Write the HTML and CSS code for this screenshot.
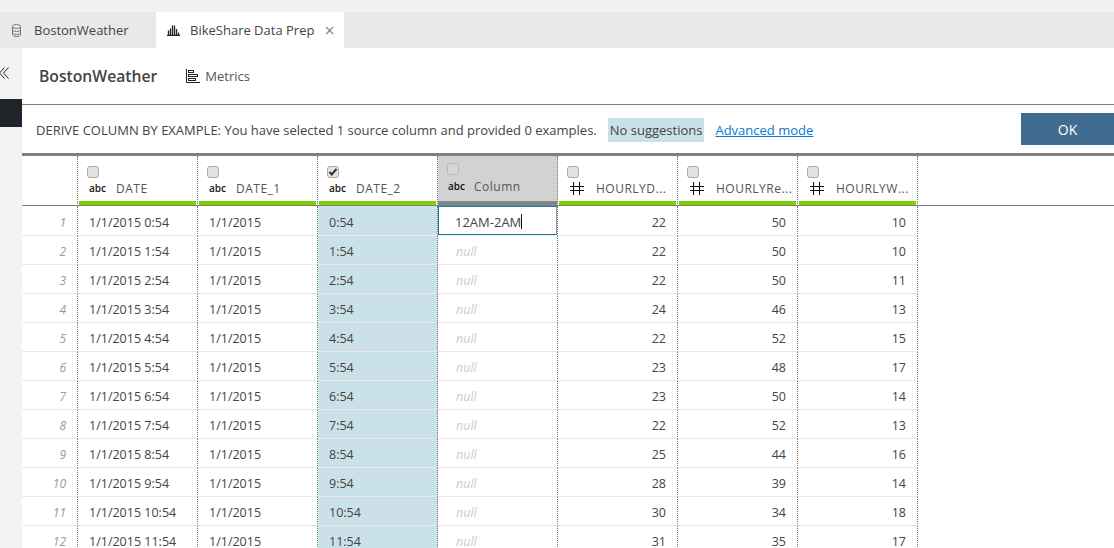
FILE: index.html
```html
<!DOCTYPE html>
<html lang="en">
  <head>
    <meta charset="UTF-8" />
    <title>BikeShare Data Prep</title>
    <link rel="stylesheet" href="styles.css">
  </head>
  <body>
    <div class="tabbar">
      <div class="tab">
        <svg class="tab-icon" width="11" height="13" viewBox="0 0 11 13" fill="none" stroke="#777" stroke-width="1">
          <ellipse cx="5.5" cy="2.5" rx="4" ry="2" />
          <path d="M1.5 2.5v8c0 1.1 1.8 2 4 2s4-.9 4-2v-8M1.5 5.5c0 1.1 1.8 2 4 2s4-.9 4-2M1.5 8.5c0 1.1 1.8 2 4 2s4-.9 4-2" />
        </svg>
        <span>BostonWeather</span>
      </div>
      <div class="tab active">
        <svg class="tab-icon" width="13" height="12" viewBox="0 0 13 12" fill="none" stroke="#222" stroke-width="1.3">
          <path d="M0 11.4h13M1.5 11V6.5M3.5 11V4.5M5.5 11V1.5M7.5 11V1.5M9.5 11V5M11.5 11V8.5" />
        </svg>
        <span>BikeShare Data Prep</span>
        <span class="close">&#215;</span>
      </div>
    </div>

    <div class="layout">
      <div class="rail">
        <div class="collapse">
          <svg width="9" height="12" viewBox="0 0 9 12" fill="none" stroke="#222" stroke-width="1">
            <path d="M4.5 .5L-.5 6l5 5.5M8.5 .5L3.5 6l5 5.5" />
          </svg>
        </div>
        <div class="rail-item"></div>
      </div>

      <div class="main">
        <div class="title-bar">
          <h2>BostonWeather</h2>
          <div class="metrics">
            <svg width="14" height="14" viewBox="0 0 14 14" fill="none" stroke="#222" stroke-width="1">
              <path d="M.5 0v13.5H14" />
              <rect x="2.5" y="1.5" width="5" height="2" />
              <rect x="2.5" y="5.5" width="9" height="2" />
              <rect x="2.5" y="9.5" width="7" height="2" />
            </svg>
            <span>Metrics</span>
          </div>
        </div>

        <div class="derive-bar">
          <span class="derive-text">DERIVE COLUMN BY EXAMPLE: You have selected 1 source column and provided 0 examples.</span>
          <span class="suggestions">No suggestions</span>
          <a class="advanced" href="#">Advanced mode</a>
          <button class="ok">OK</button>
        </div>

        <table class="grid">
          <thead>
            <tr>
              <th class="num-col"></th>
              <th><div class="head"><span class="check"></span><div class="head-label"><span class="abc">abc</span><span class="name">DATE</span></div></div><div class="quality"></div></th>
              <th><div class="head"><span class="check"></span><div class="head-label"><span class="abc">abc</span><span class="name">DATE_1</span></div></div><div class="quality"></div></th>
              <th><div class="head"><span class="check"><svg width="10" height="10" viewBox="0 0 10 10" fill="none" stroke="#333" stroke-width="2"><path d="M1.5 5l2.2 2.5L8.5 2" /></svg></span><div class="head-label"><span class="abc">abc</span><span class="name">DATE_2</span></div></div><div class="quality"></div></th>
              <th class="new-col"><div class="head"><span class="check"></span><div class="head-label"><span class="abc">abc</span><span class="name">Column</span></div></div><div class="quality"></div></th>
              <th><div class="head"><span class="check"></span><div class="head-label"><svg class="hash" width="14" height="13" viewBox="0 0 14 13" fill="none" stroke="#111" stroke-width="1"><path d="M3.5 0v13M9.5 0v13M0 4.5h14M0 8.5h14" /></svg><span class="name">HOURLYD...</span></div></div><div class="quality"></div></th>
              <th><div class="head"><span class="check"></span><div class="head-label"><svg class="hash" width="14" height="13" viewBox="0 0 14 13" fill="none" stroke="#111" stroke-width="1"><path d="M3.5 0v13M9.5 0v13M0 4.5h14M0 8.5h14" /></svg><span class="name">HOURLYRe...</span></div></div><div class="quality"></div></th>
              <th><div class="head"><span class="check"></span><div class="head-label"><svg class="hash" width="14" height="13" viewBox="0 0 14 13" fill="none" stroke="#111" stroke-width="1"><path d="M3.5 0v13M9.5 0v13M0 4.5h14M0 8.5h14" /></svg><span class="name">HOURLYW...</span></div></div><div class="quality"></div></th>
              <th class="filler"></th>
            </tr>
          </thead>
          <tbody>
            <tr><td class="num">1</td><td>1/1/2015 0:54</td><td>1/1/2015</td><td class="sel">0:54</td><td class="editing"><div class="edit-box">12AM-2AM<span class="caret"></span></div></td><td class="val">22</td><td class="val">50</td><td class="val">10</td><td class="filler"></td></tr>
            <tr><td class="num">2</td><td>1/1/2015 1:54</td><td>1/1/2015</td><td class="sel">1:54</td><td class="null">null</td><td class="val">22</td><td class="val">50</td><td class="val">10</td><td class="filler"></td></tr>
            <tr><td class="num">3</td><td>1/1/2015 2:54</td><td>1/1/2015</td><td class="sel">2:54</td><td class="null">null</td><td class="val">22</td><td class="val">50</td><td class="val">11</td><td class="filler"></td></tr>
            <tr><td class="num">4</td><td>1/1/2015 3:54</td><td>1/1/2015</td><td class="sel">3:54</td><td class="null">null</td><td class="val">24</td><td class="val">46</td><td class="val">13</td><td class="filler"></td></tr>
            <tr><td class="num">5</td><td>1/1/2015 4:54</td><td>1/1/2015</td><td class="sel">4:54</td><td class="null">null</td><td class="val">22</td><td class="val">52</td><td class="val">15</td><td class="filler"></td></tr>
            <tr><td class="num">6</td><td>1/1/2015 5:54</td><td>1/1/2015</td><td class="sel">5:54</td><td class="null">null</td><td class="val">23</td><td class="val">48</td><td class="val">17</td><td class="filler"></td></tr>
            <tr><td class="num">7</td><td>1/1/2015 6:54</td><td>1/1/2015</td><td class="sel">6:54</td><td class="null">null</td><td class="val">23</td><td class="val">50</td><td class="val">14</td><td class="filler"></td></tr>
            <tr><td class="num">8</td><td>1/1/2015 7:54</td><td>1/1/2015</td><td class="sel">7:54</td><td class="null">null</td><td class="val">22</td><td class="val">52</td><td class="val">13</td><td class="filler"></td></tr>
            <tr><td class="num">9</td><td>1/1/2015 8:54</td><td>1/1/2015</td><td class="sel">8:54</td><td class="null">null</td><td class="val">25</td><td class="val">44</td><td class="val">16</td><td class="filler"></td></tr>
            <tr><td class="num">10</td><td>1/1/2015 9:54</td><td>1/1/2015</td><td class="sel">9:54</td><td class="null">null</td><td class="val">28</td><td class="val">39</td><td class="val">14</td><td class="filler"></td></tr>
            <tr><td class="num">11</td><td>1/1/2015 10:54</td><td>1/1/2015</td><td class="sel">10:54</td><td class="null">null</td><td class="val">30</td><td class="val">34</td><td class="val">18</td><td class="filler"></td></tr>
            <tr><td class="num">12</td><td>1/1/2015 11:54</td><td>1/1/2015</td><td class="sel">11:54</td><td class="null">null</td><td class="val">31</td><td class="val">35</td><td class="val">17</td><td class="filler"></td></tr>
          </tbody>
        </table>
      </div>
    </div>
  </body>
</html>
```

FILE: styles.css
```css
html,
body {
  height: 100%;
}
body {
  margin: 0;
  padding-top: 12px;
  box-sizing: border-box;
  overflow: hidden;
  background: #f1f1f1;
  color: #444;
  font-family: "Open Sans", "Noto Sans", sans-serif;
  font-size: 13px;
}

/* tabs */
.tabbar {
  display: flex;
  height: 36px;
  background: #e9e9e9;
}
.tab {
  display: flex;
  align-items: center;
  width: 156px;
  box-sizing: border-box;
  padding-left: 11px;
  color: #444;
}
.tab-icon {
  margin-right: 12px;
}
.tab.active {
  width: 188px;
  background: white;
}
.tab.active .tab-icon {
  margin-right: 10px;
}
.close {
  margin-left: 10px;
  color: #888;
  font-size: 18px;
}

.layout {
  display: flex;
  height: 500px;
}

/* left rail */
.rail {
  width: 22px;
  flex: none;
  background: #f3f3f3;
}
.collapse {
  height: 51px;
  padding-top: 19px;
  box-sizing: border-box;
}
.collapse svg {
  display: block;
}
.rail-item {
  height: 28px;
  background: #20242a;
}

.main {
  flex: 1;
  min-width: 0;
  background: white;
}

.title-bar {
  display: flex;
  align-items: center;
  height: 57px;
  padding-left: 17px;
  box-sizing: border-box;
  border-bottom: 1px solid #808080;
}
.title-bar h2 {
  margin: 0 29px 0 0;
  font-size: 15.7px;
  font-weight: 600;
  color: #444;
}
.metrics {
  display: flex;
  align-items: center;
  gap: 5px;
  color: #555;
}

.derive-bar {
  display: flex;
  align-items: center;
  height: 48px;
  padding-left: 14px;
  box-sizing: border-box;
}
.derive-text,
.advanced {
  margin-top: 2px;
}
.derive-text {
  margin-right: 11px;
}
.suggestions {
  padding: 3px 2px;
  margin-top: 1px;
  background: #cbe1e9;
}
.advanced {
  margin-left: 11px;
  color: #0a78d2;
}
.ok {
  width: 93px;
  height: 32px;
  margin-left: auto;
  border: none;
  background: #416b8f;
  color: white;
  font-family: inherit;
  font-size: 14px;
}

/* data grid */
.grid {
  width: 100%;
  table-layout: fixed;
  border-collapse: separate;
  border-spacing: 0;
  border-top: 3px solid #808080;
}
.grid th {
  width: 120px;
  height: 50px;
  padding: 0;
  vertical-align: bottom;
  font-weight: normal;
  text-align: left;
  border-right: 1px dotted #777;
  border-bottom: 1px solid #808080;
  box-sizing: border-box;
}
.grid th.num-col {
  width: 56px;
}
.grid th.filler {
  width: auto;
  border-right: none;
}
.head {
  height: 45px;
  padding: 10px 0 0 9px;
  box-sizing: border-box;
}
.quality {
  height: 4px;
  margin: 0 1px;
  background: #7ed100;
}
.check {
  display: block;
  width: 12px;
  height: 12px;
  box-sizing: border-box;
  border: 1px solid #aaa;
  border-radius: 3px;
  background: #e2e2e2;
}
.check svg {
  display: block;
}
.head-label {
  display: flex;
  align-items: center;
  height: 18px;
  margin-top: 1px;
}
.abc {
  width: 27px;
  margin-left: 2px;
  font-size: 10px;
  font-weight: 600;
  color: #111;
}
.hash {
  margin: 1px 12px 0 3px;
}
.name {
  font-size: 12px;
  letter-spacing: 0.5px;
  color: #555;
}
.new-col {
  background: #d2d2d2;
}
.new-col .head {
  padding-top: 7px;
}
.new-col .quality {
  margin: 0;
  background: #7f8488;
}
.new-col .check {
  background: #d6d6d6;
  border-color: #bbb;
}
.new-col .head-label {
  margin-top: 2px;
}
.new-col .abc {
  width: 26px;
  margin-left: 1px;
}

.grid td {
  height: 29px;
  padding: 3px 11px 0 11px;
  box-sizing: border-box;
  border-right: 1px dotted #777;
  border-bottom: 1px solid #e9e9e9;
  white-space: nowrap;
  font-size: 12.5px;
  color: #444;
}
.grid td.num {
  text-align: right;
  font-style: italic;
  font-size: 12px;
  color: #999;
}
.grid td.sel {
  background: #cbe1e9;
}
.grid td.null {
  padding-left: 18px;
  font-style: italic;
  color: #ccc;
}
.grid td.val {
  text-align: right;
}
.grid td.filler {
  border: none;
}
.grid td.editing {
  padding: 0;
}
.edit-box {
  display: flex;
  align-items: center;
  height: 29px;
  padding: 2px 0 0 16px;
  box-sizing: border-box;
  border: 1px solid #1a7a9a;
  border-right-color: #999;
  font-size: 13px;
}
.caret {
  width: 1px;
  height: 15px;
  background: #111;
}
```
